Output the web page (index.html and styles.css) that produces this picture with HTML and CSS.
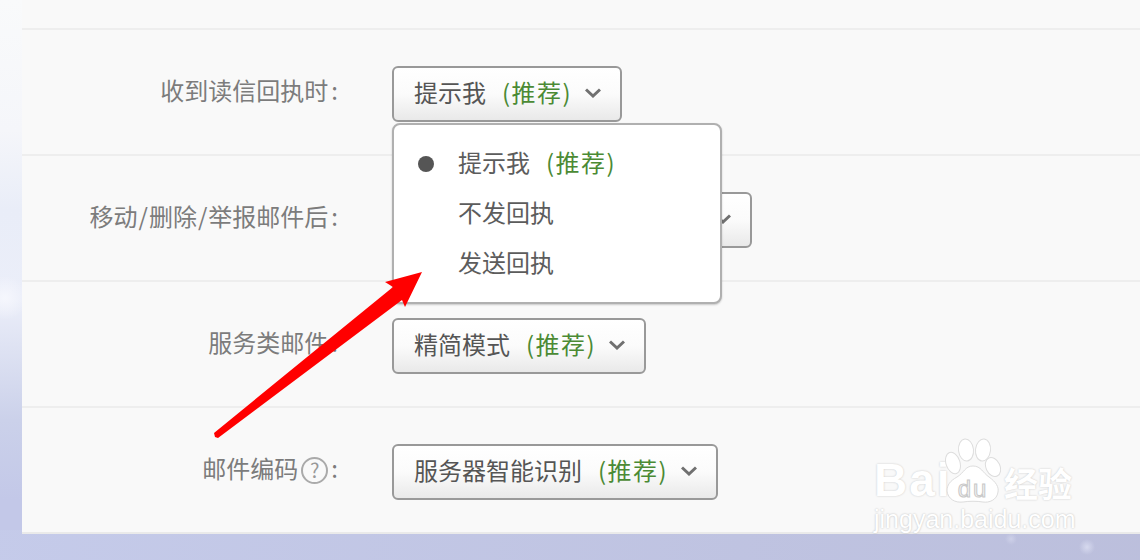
FILE: index.html
```html
<!DOCTYPE html>
<html lang="en">
<head>
<meta charset="UTF-8">
<meta name="viewport" content="width=device-width, initial-scale=1.0">
<title>邮件设置</title>
<link rel="stylesheet" href="styles.css">
</head>
<body>
    <div class="panel">
        <div class="row row-top"></div>

        <div class="row">
            <div class="label">收到读信回执时<span class="colon">:</span></div>
            <div class="field">
                <div class="select">
                    <span>提示我</span><span class="tip">(推荐)</span>
                    <svg class="chevron" viewBox="0 0 16 10"><path d="M1 1.500 8 8l7-6.500"/></svg>
                </div>
                <div class="menu">
                    <div class="menu-item"><i class="dot"></i>提示我<span class="tip">(推荐)</span></div>
                    <div class="menu-item">不发回执</div>
                    <div class="menu-item">发送回执</div>
                </div>
            </div>
        </div>

        <div class="row">
            <div class="label">移动<span class="slash">/</span>删除<span class="slash">/</span>举报邮件后<span class="colon">:</span></div>
            <div class="field">
                <div class="select select-wide">
                    <svg class="chevron" viewBox="0 0 16 10"><path d="M1 1.500 8 8l7-6.500"/></svg>
                </div>
            </div>
        </div>

        <div class="row">
            <div class="label">服务类邮件<span class="colon">:</span></div>
            <div class="field">
                <div class="select">
                    <span>精简模式</span><span class="tip">(推荐)</span>
                    <svg class="chevron" viewBox="0 0 16 10"><path d="M1 1.500 8 8l7-6.500"/></svg>
                </div>
            </div>
        </div>

        <div class="row">
            <div class="label">邮件编码<span class="help">?</span><span class="colon">:</span></div>
            <div class="field">
                <div class="select">
                    <span>服务器智能识别</span><span class="tip">(推荐)</span>
                    <svg class="chevron" viewBox="0 0 16 10"><path d="M1 1.500 8 8l7-6.500"/></svg>
                </div>
            </div>
        </div>
    </div>

    <svg class="arrow" viewBox="0 0 1140 560">
        <polygon points="422,272 385,282 393,287 214,433 215,437 218,438 402,300 405,307"/>
    </svg>

    <div class="watermark">
        <div class="wm-logo">
            <span class="wm-bai">Bai</span>
            <svg class="wm-paw" viewBox="0 0 56 68">
                <ellipse cx="21" cy="14" rx="7.500" ry="11" transform="rotate(-6 21 14)"/>
                <ellipse cx="38" cy="14" rx="7.500" ry="11" transform="rotate(6 38 14)"/>
                <ellipse cx="8" cy="27" rx="7" ry="11" transform="rotate(-18 8 27)"/>
                <ellipse cx="48" cy="31" rx="7" ry="10" transform="rotate(-25 48 31)"/>
                <path d="M28 30c8 0 10 7 16 11 7 5 10 10 9 15-1 8-9 11-15 10-6-1-14-1-20 0-8 1-15-3-16-11 0-6 3-10 10-14 7-4 8-11 16-11z"/>
                <text x="28" y="61" class="wm-du">du</text>
            </svg>
            <span class="wm-cn">经验</span>
        </div>
        <div class="wm-url">jingyan.baidu.com</div>
    </div>
</body>
</html>
```

FILE: styles.css
```css
* {
    box-sizing: border-box;
}

html, body {
    height: 100%;
}

body {
    margin: 0;
    overflow: hidden;
    font-family: "Noto Sans CJK SC", "Noto Sans", sans-serif;
    font-size: 24px;
    background-color: #c5c9e8;
    background-image:
        radial-gradient(circle at 5px 298px, rgba(248, 249, 254, 0.8) 0, rgba(248, 249, 254, 0) 22px),
        radial-gradient(circle at 1087px 547px, #d6d9ee 0, rgba(214, 217, 238, 0) 8px),
        radial-gradient(circle at 1011px 539px, #cdd0e8 0, rgba(205, 208, 232, 0) 6px),
        linear-gradient(90deg, rgba(197, 203, 234, 0.9) 0, rgba(187, 190, 219, 0.9) 1140px),
        linear-gradient(180deg, #f9fafb 0, #f5f6fa 130px, #e9edf8 210px, #ebeef9 300px, #dfe3f3 345px, #cbd1ea 420px, #c3c8e8 500px);
    background-size: auto, auto, auto, 100% 30px, auto;
    background-position: 0 0, 0 0, 0 0, 0 100%, 0 0;
    background-repeat: no-repeat;
}

.panel {
    margin-left: 22px;
    height: 534px;
    background-color: #f9f9f9;
    border-bottom: 2px solid #eaeaea;
}

.row {
    display: flex;
    height: 126px;
    border-top: 2px solid #eeeeee;
}

.row-top {
    height: 28px;
    border-top: none;
}

.row:last-child {
    height: 125px;
}

.label {
    width: 316px;
    padding-top: 42px;
    text-align: right;
    color: #7c7c7c;
    line-height: 36px;
    white-space: nowrap;
}

.colon {
    margin-left: 3px;
}

.slash {
    margin: 0 1px;
}

.field {
    position: relative;
    margin-left: 54px;
    padding-top: 36px;
}

.select {
    display: inline-flex;
    align-items: center;
    height: 56px;
    padding: 0 20px 6px;
    border: 2px solid #999999;
    border-radius: 6px;
    background: linear-gradient(180deg, #ffffff 0, #fbfbfb 50%, #e9e9e9 100%);
    color: #555555;
    white-space: nowrap;
}

.select-wide {
    width: 360px;
}

.tip {
    margin-left: 16px;
    letter-spacing: 1.500px;
    color: #4b8a34;
}

.chevron {
    flex: none;
    width: 16px;
    height: 10px;
    margin-left: 13px;
    margin-top: 3px;
    margin-right: -1px;
    fill: none;
    stroke: #707070;
    stroke-width: 3;
}

.select-wide .chevron {
    margin-left: auto;
}

.menu {
    position: absolute;
    left: 0;
    top: 93px;
    width: 330px;
    height: 181px;
    padding-top: 12px;
    background-color: #ffffff;
    border: 2px solid #b0b0b0;
    border-radius: 8px;
    box-shadow: 0 1px 2px rgba(0, 0, 0, 0.2);
    color: #5c5c5c;
    z-index: 2;
}

.menu-item {
    position: relative;
    height: 50px;
    padding-left: 64px;
    line-height: 50px;
    white-space: nowrap;
}

.dot {
    position: absolute;
    left: 24px;
    top: 19px;
    width: 16px;
    height: 16px;
    border-radius: 50%;
    background-color: #555555;
}

.help {
    display: inline-block;
    width: 27px;
    height: 27px;
    margin-left: 3px;
    border: 2px solid #aaaaaa;
    border-radius: 50%;
    color: #999999;
    font-size: 20px;
    line-height: 22px;
    text-align: center;
    vertical-align: 0;
}

.arrow {
    position: absolute;
    left: 0;
    top: 0;
    width: 1140px;
    height: 560px;
    z-index: 3;
}

.arrow polygon {
    fill: #ff0000;
}

.watermark {
    position: absolute;
    left: 874px;
    top: 436px;
    width: 206px;
    color: #ffffff;
    z-index: 4;
}

.wm-logo {
    display: flex;
    align-items: flex-end;
    height: 68px;
}

.wm-bai {
    width: 71px;
    font-family: "Liberation Sans", sans-serif;
    font-size: 46px;
    font-weight: bold;
    line-height: 48px;
    letter-spacing: 2px;
    text-shadow: 0 0 2px #c4c4c4;
}

.wm-paw {
    flex: none;
    width: 56px;
    height: 68px;
    fill: #ffffff;
    stroke: #dddddd;
    stroke-width: 1;
}

.wm-du {
    font-family: "Liberation Sans", sans-serif;
    font-size: 24px;
    letter-spacing: 2px;
    text-anchor: middle;
    fill: #f4f4f4;
    stroke: #c8c8c8;
}

.wm-cn {
    margin-left: 3px;
    font-size: 34px;
    font-weight: bold;
    line-height: 42px;
    white-space: nowrap;
    text-shadow: 0 0 2px #c4c4c4;
}

.wm-url {
    margin-top: 1px;
    font-family: "Liberation Sans", sans-serif;
    font-size: 25px;
    line-height: 28px;
    white-space: nowrap;
    text-shadow: 0 0 2px #b8b8b8;
}
```
